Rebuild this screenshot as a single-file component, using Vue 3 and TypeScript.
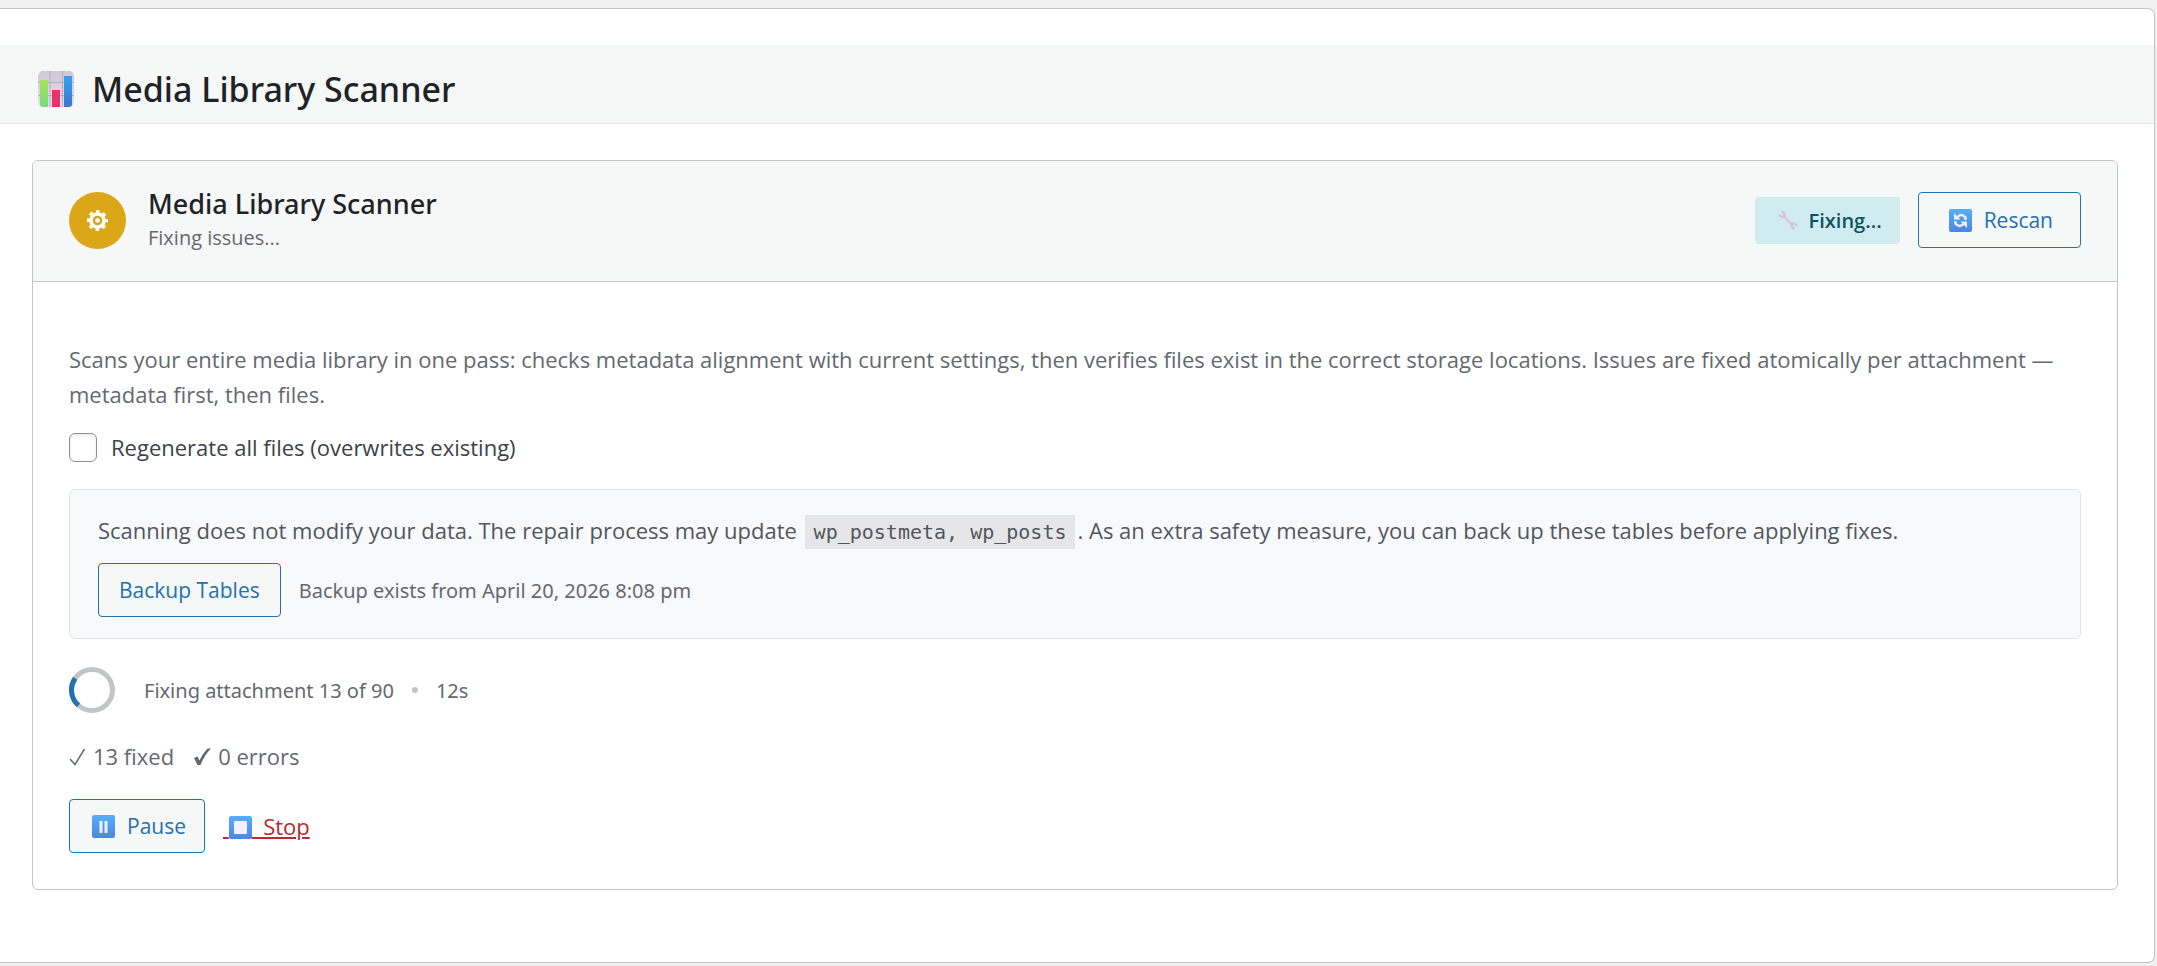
<script setup lang="ts">
import { ref } from 'vue'

const regenerate = ref(false)
const fixed = ref(13)
const errors = ref(0)
const total = ref(90)
const elapsed = ref(12)
const tables = ['wp_postmeta', 'wp_posts']
</script>

<template>
  <main class="panel">
    <header class="page-head">
      <svg class="chart" viewBox="0 0 36 36" aria-hidden="true">
        <defs>
          <linearGradient id="g-bg" x1="0" y1="0" x2="0" y2="1">
            <stop offset="0" stop-color="#cfc9d8" /><stop offset="1" stop-color="#e4dfe9" />
          </linearGradient>
          <linearGradient id="g-green" x1="0" y1="0" x2="0" y2="1">
            <stop offset="0" stop-color="#a9e25a" /><stop offset="1" stop-color="#74dd7c" />
          </linearGradient>
          <linearGradient id="g-blue" x1="0" y1="0" x2="0" y2="1">
            <stop offset="0" stop-color="#35a1f1" /><stop offset="1" stop-color="#3a78c9" />
          </linearGradient>
        </defs>
        <rect width="36" height="36" rx="5" fill="url(#g-bg)" />
        <path d="M0 11.500H36M0 24.500H36M12 0V36M24.500 0V36" stroke="#b3adbf" stroke-width="1" />
        <path d="M2 9H10V36H5Q2 36 2 33Z" fill="url(#g-green)" />
        <rect x="14" y="19" width="8" height="17" fill="#e8336f" />
        <path d="M26 5H34V33Q34 36 31 36H26Z" fill="url(#g-blue)" />
      </svg>
      <h1>Media Library Scanner</h1>
    </header>

    <section class="card">
      <header class="card-head">
        <span class="status">
          <svg viewBox="0 0 24 24" aria-hidden="true">
            <circle cx="12" cy="12" r="10" fill="none" stroke="#fff" stroke-width="4" stroke-dasharray="3.930 3.924" stroke-dashoffset="1.965" />
            <circle cx="12" cy="12" r="7.500" fill="none" stroke="#fff" stroke-width="4" />
            <circle cx="12" cy="12" r="2.600" fill="#fff" />
          </svg>
        </span>
        <div class="titles">
          <h2>Media Library Scanner</h2>
          <p>Fixing issues...</p>
        </div>
        <div class="head-actions">
          <span class="badge">
            <svg viewBox="0 0 20 20" aria-hidden="true">
              <path d="M5 5.500L15 15.500" stroke="#dccbdc" stroke-width="3" />
              <path d="M4.500 1.500L6.500 4V6L4.500 7L1.500 5.500M15.500 18.500L13.500 16.500V14L15.500 13.500L18.500 15" fill="none" stroke="#d3c4d6" stroke-width="2.500" stroke-linejoin="round" stroke-linecap="round" />
            </svg>
            Fixing...
          </span>
          <button type="button" class="btn btn-large">
            <svg viewBox="0 0 23 23" aria-hidden="true">
              <defs>
                <linearGradient id="g-tile" x1="0" y1="0" x2="0" y2="1">
                  <stop offset="0" stop-color="#57aefb" /><stop offset="1" stop-color="#4a86e6" />
                </linearGradient>
              </defs>
              <rect width="23" height="23" rx="2" fill="url(#g-tile)" />
              <path d="M8 8.500Q12.500 3.500 16.500 8.500V11M15 14.500Q10.500 19.500 6.500 14.500V12" fill="none" stroke="#f4efff" stroke-width="2.500" />
              <path d="M5 4V10.500H11.500ZM18 19V12.500H11.500Z" fill="#f4efff" />
            </svg>
            Rescan
          </button>
        </div>
      </header>

      <div class="card-body">
        <p class="intro">
          Scans your entire media library in one pass: checks metadata alignment with current settings, then verifies files exist in the correct storage locations. Issues are fixed atomically per attachment — metadata first, then files.
        </p>

        <label class="option" for="regenerate">
          <input id="regenerate" v-model="regenerate" type="checkbox" />
          Regenerate all files (overwrites existing)
        </label>

        <div class="notice">
          <p>
            Scanning does not modify your data. The repair process may update
            <code>{{ tables.join(', ') }}</code>. As an extra safety measure, you can back up these tables before applying fixes.
          </p>
          <div class="backup">
            <button type="button" class="btn">Backup Tables</button>
            <span>Backup exists from April 20, 2026 8:08 pm</span>
          </div>
        </div>

        <div class="progress" role="status">
          <svg viewBox="0 0 46 46" aria-hidden="true">
            <circle cx="23" cy="23" r="20.500" fill="none" stroke="#c3c4c7" stroke-width="5" />
            <path d="M9.500 38.400A20.500 20.500 0 0 1 6.200 11.250" fill="none" stroke="#2271b1" stroke-width="5" />
          </svg>
          <span>Fixing attachment {{ fixed }} of {{ total }}</span>
          <i class="dot"></i>
          <span>{{ elapsed }}s</span>
        </div>

        <div class="stats">
          <span>
            <svg viewBox="0 0 17 18" role="img" aria-label="✓"><path d="M1 11L6 16.500L15.500 1" fill="none" stroke="currentColor" stroke-width="1.500" /></svg>
            {{ fixed }} fixed
          </span>
          <span>
            <svg viewBox="0 0 17 18" role="img" aria-label="✔"><path d="M0 10L3.500 8.500L5.500 12.500Q9 5 13.500 0.500L17 0.500Q10.500 7 6.500 17H3.500Z" fill="currentColor" /></svg>
            {{ errors }} errors
          </span>
        </div>

        <div class="controls">
          <button type="button" class="btn">
            <svg viewBox="0 0 23 23" aria-hidden="true">
              <rect width="23" height="23" rx="2" fill="url(#g-tile)" />
              <path d="M7.500 6H10.500V18H7.500ZM12.500 6H15.500V18H12.500Z" fill="#f4efff" />
            </svg>
            Pause
          </button>
          <button type="button" class="stop">
            &nbsp;<svg viewBox="0 0 23 23" aria-hidden="true">
              <rect width="23" height="23" rx="2" fill="url(#g-tile)" />
              <rect x="5" y="5" width="13" height="13" rx="1" fill="#f6efff" />
            </svg>&nbsp; Stop
          </button>
        </div>
      </div>
    </section>
  </main>
</template>

<style>
body {
  background: #f0f0f1;
}
</style>

<style scoped>
.panel {
  box-sizing: border-box;
  margin: 8px 2px 2px 0;
  padding: 36px 0 72px;
  border: 1px solid #c3c4c7;
  border-left: 0;
  border-radius: 0 7px 7px 0;
  background: #fff;
  color: #646970;
  font-family: "Open Sans", "Noto Sans", sans-serif;
  font-size: 22px;
  line-height: 35px;
}
h1, h2, p {
  margin: 0;
}
h1, h2 {
  color: #1d2327;
  font-family: "Noto Sans", sans-serif;
  font-weight: 500;
}
svg {
  display: block;
  flex: none;
}
.page-head {
  display: flex;
  align-items: center;
  gap: 18px;
  padding: 20px 38px 10px;
  border-bottom: 1px solid #e5e8e8;
  background: #f6f7f7;
}
.chart {
  width: 36px;
  height: 36px;
}
h1 {
  font-size: 34px;
  line-height: 48px;
}
.card {
  margin: 36px 36px 0 32px;
  border: 1px solid #c3c4c7;
  border-radius: 6px;
  overflow: hidden;
}
.card-head {
  display: flex;
  align-items: center;
  padding: 27px 36px 29px;
  border-bottom: 1px solid #c3c4c7;
  background: #f6f7f7;
}
.status {
  display: grid;
  place-items: center;
  width: 57px;
  height: 57px;
  border-radius: 50%;
  background: #dba617;
}
.status svg {
  width: 21px;
  height: 21px;
}
.titles {
  flex: 1;
  margin-left: 22px;
}
h2 {
  font-size: 27px;
  line-height: 32px;
}
.titles p {
  margin-top: 4px;
  font-size: 20px;
  line-height: 28px;
}
.head-actions {
  display: flex;
  align-items: center;
  gap: 18px;
}
.badge {
  display: flex;
  align-items: center;
  gap: 11px;
  height: 47px;
  padding: 0 18px 0 23px;
  border-radius: 4px;
  background: #d1ecf1;
  color: #0c5460;
  font-size: 20px;
  font-weight: 600;
}
.badge svg {
  width: 20px;
  height: 20px;
}
.btn {
  display: flex;
  align-items: center;
  gap: 12px;
  box-sizing: border-box;
  height: 54px;
  padding: 0 20px;
  border: 1px solid #2271b1;
  border-radius: 4px;
  background: #f6f7f7;
  color: #2271b1;
  font: inherit;
  font-size: 21px;
}
.btn-large {
  height: 56px;
  padding: 0 27px 0 30px;
}
.btn svg, .stop svg {
  width: 23px;
  height: 23px;
}
.card-body {
  padding: 60px 36px 36px;
}
.option {
  display: flex;
  align-items: center;
  gap: 14px;
  margin-top: 18px;
  color: #3c434a;
}
.option input {
  appearance: none;
  width: 28px;
  height: 29px;
  margin: 0;
  border: 1px solid #8c8f94;
  border-radius: 6px;
  background: #fff;
  box-shadow: inset 0 1px 3px rgba(0, 0, 0, 0.1);
}
.notice {
  margin-top: 24px;
  padding: 23px 28px 21px;
  border: 1px solid #e2e4e7;
  border-radius: 6px;
  background: #f8f9fb;
}
.notice p {
  color: #50575e;
}
code {
  padding: 5px 9px;
  margin: 0 2px;
  background: #e6e6e8;
  font-family: "DejaVu Sans Mono", monospace;
  font-size: 20px;
  line-height: 24px;
}
.backup {
  display: flex;
  align-items: center;
  gap: 18px;
  margin-top: 15px;
}
.backup span, .progress {
  font-family: "Noto Sans", sans-serif;
  font-size: 20px;
}
.progress {
  display: flex;
  align-items: center;
  margin-top: 28px;
}
.progress svg {
  width: 46px;
  height: 46px;
  margin-right: 29px;
}
.dot {
  width: 6px;
  height: 6px;
  margin: 0 18px;
  border-radius: 50%;
  background: #c3c4c7;
}
.stats {
  display: flex;
  gap: 20px;
  margin-top: 26px;
}
.stats span {
  display: flex;
  align-items: center;
  gap: 7px;
}
.stats svg {
  width: 17px;
  height: 18px;
}
.controls {
  display: flex;
  align-items: center;
  gap: 18px;
  margin-top: 25px;
}
.controls .btn {
  padding: 0 18px 0 22px;
}
.stop {
  padding: 0;
  border: 0;
  background: none;
  color: #b32d2e;
  font: inherit;
  text-decoration: underline;
}
.stop svg {
  display: inline-block;
  vertical-align: -4px;
}
</style>
